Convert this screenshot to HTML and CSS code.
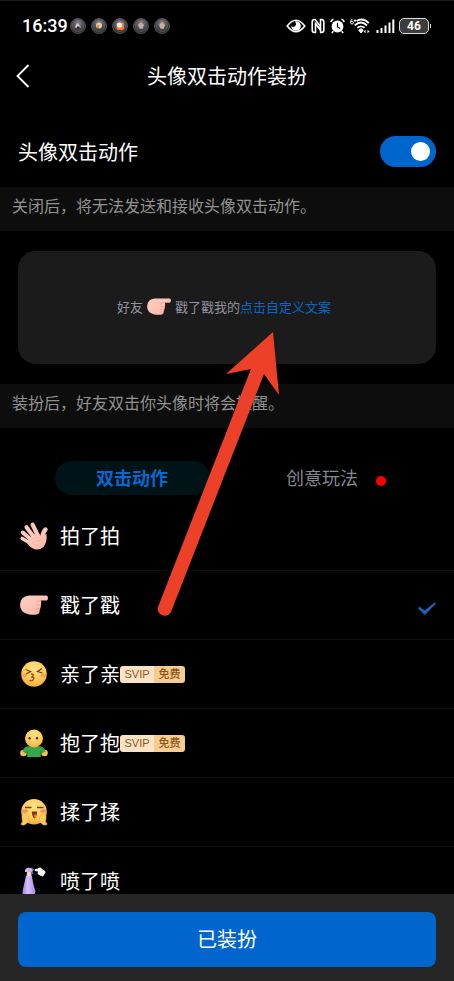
FILE: index.html
```html
<!DOCTYPE html>
<html lang="zh-CN">
<head>
<meta charset="utf-8">
<meta name="viewport" content="width=device-width, initial-scale=1">
<title>头像双击动作装扮</title>
<link rel="stylesheet" href="styles.css">
</head>
<body>
<svg class="defs" aria-hidden="true">
  <defs>
    <linearGradient id="skin" x1="0" y1="0" x2="1" y2="1"><stop offset="0" stop-color="#ffd0c4"/><stop offset="1" stop-color="#fbb3a6"/></linearGradient>
    <radialGradient id="face" cx=".5" cy=".3" r=".75"><stop offset="0" stop-color="#ffe38a"/><stop offset=".6" stop-color="#fdcb55"/><stop offset="1" stop-color="#f2a53c"/></radialGradient>
    <linearGradient id="bottle" x1="0" x2="1"><stop offset="0" stop-color="#9c7cf0"/><stop offset=".4" stop-color="#d5c3fb"/><stop offset="1" stop-color="#a78be8"/></linearGradient>
    <radialGradient id="lens" cx=".5" cy=".35" r=".6"><stop offset="0" stop-color="#8d8f99"/><stop offset=".6" stop-color="#45454e"/><stop offset="1" stop-color="#29292c"/></radialGradient>
    <symbol id="poke" viewBox="0 0 28 20">
      <path d="M9 .5H26.5Q28 .7 28 3T26.500 5.500H20.500Q21.800 6.500 21 8.500Q21.500 9 20.500 12.500Q20.500 13 19.500 15.500Q20 18.500 17.500 19.300Q13 20.300 8.500 19.300Q0 17.500 0 10Q0 1.500 9 .5Z" fill="url(#skin)"/>
      <path d="M20.500 5.600Q17 5.800 16 7.500M21 9.500Q18.500 10.500 16.500 10M20.300 13Q18 14 16 13.300M19.300 16Q17.500 17 15.500 16.300" fill="none" stroke="#ed9a90" stroke-width=".7"/>
    </symbol>
    <symbol id="badge-lens" viewBox="0 0 16 16">
      <circle cx="8" cy="8" r="7.500" fill="url(#lens)" stroke="#6b6462" stroke-width=".7"/>
      <circle cx="8" cy="8" r="5.500" fill="none" stroke="#9a9696" stroke-opacity=".45" stroke-width=".7"/>
    </symbol>
  </defs>
</svg>
<div class="screen">
  <div class="status">
    <time class="clock">16:39</time>
    <div class="notices" aria-hidden="true">
      <svg viewBox="0 0 16 16"><use href="#badge-lens"/><path d="M4.500 9.500 7.500 5 11 9.500Z" fill="#d8d2c5"/><path d="M7 8.500h2.500v2H7z" fill="#282018"/></svg>
      <svg viewBox="0 0 16 16"><use href="#badge-lens"/><circle cx="8" cy="7.500" r="3" fill="#e9c8a0"/><path d="M6 7h2v3H6z" fill="#d98a45"/></svg>
      <svg viewBox="0 0 16 16"><use href="#badge-lens"/><rect x="4.500" y="4.500" width="7.500" height="7.500" rx="2" fill="#f47b31"/><circle cx="7.500" cy="7" r="2.600" fill="#fff0df"/></svg>
      <svg viewBox="0 0 16 16"><use href="#badge-lens"/><path d="M8 4 11 7 9.500 11 6.500 10.500 5 7Z" fill="#bdaea0"/></svg>
      <svg viewBox="0 0 16 16"><use href="#badge-lens"/><path d="M8 4 11 7 9.500 11 6.500 10.500 5 7Z" fill="#c5b39c"/></svg>
    </div>
    <div class="system">
      <svg width="20" height="16" viewBox="0 0 20 16" aria-hidden="true"><path d="M1.200 8Q10-3.500 18.800 8Q10 19.500 1.200 8Z" fill="none" stroke="#fff" stroke-width="1.600"/><path d="M10 3.200a4.800 4.800 0 1 1-4.800 4.800Q7.800 10 9.600 7.500Q10.700 5.500 9 3.400Z" fill="#fff"/></svg>
      <svg width="14" height="16" viewBox="0 0 14 16" aria-hidden="true"><path d="M5 1.500H3.500Q1.200 1.500 1.200 4v8Q1.200 14.500 3.500 14.500h1V5.500l5 6.500V1.500h1Q12.800 1.500 12.800 4v8Q12.800 14.500 10.500 14.500H9" fill="none" stroke="#fff" stroke-width="1.600"/><path d="M4.500 2 9.500 8.500M4.500 5.500 9.500 12V14.500" stroke="#fff" stroke-width="1.500" fill="none"/></svg>
      <svg width="15" height="16" viewBox="0 0 15 16" aria-hidden="true"><circle cx="7.500" cy="8.500" r="5.900" fill="#fff"/><path d="M.8 4Q1.200 1.800 3.500 1.200M14.200 4Q13.800 1.800 11.500 1.200M3.300 13.200 1.800 15M11.700 13.200 13.200 15" stroke="#fff" stroke-width="1.600" fill="none"/><path d="M7.500 4.800V9L10.200 10.500" stroke="#000" stroke-width="1.200" fill="none"/></svg>
      <svg width="21" height="16" viewBox="0 0 21 16" aria-hidden="true"><path d="M2.500 .8Q.6 2 .6 4.600a1.400 1.400 0 1 0 1.400-1.400Q1.100 3.200 .6 4.300M3.800 2.500h2.400M5 1.300v2.400" stroke="#fff" fill="none"/><path d="M6.500 3Q13-.8 18.800 5.200M4.700 7.300Q11 1.500 17 7.500M7.300 9.900Q11 6.800 14.500 9.800" stroke="#fff" stroke-width="1.800" fill="none"/><path d="M8.800 12.200 11 10.700 13.200 12.200 11 15Z" fill="#fff" stroke="#fff"/><path d="m13.500 13.500 2-1.800v3.600zM19.500 13.500 17.500 11.700v3.600z" fill="#fff"/></svg>
      <svg width="18" height="16" viewBox="0 0 18 16" aria-hidden="true"><path d="M1.500 12V15M5.500 10V15M9.500 7.500V15M13.500 4.500V15M17.300 1.500V15" stroke="#fff" stroke-width="2"/></svg>
      <span class="battery">46</span>
    </div>
  </div>

  <header class="header">
    <button class="back" type="button" aria-label="返回"><svg width="14" height="24" viewBox="0 0 14 24"><path d="M12.500 1 1.500 12 12.500 23" fill="none" stroke="#fff" stroke-width="1.800"/></svg></button>
    <h1 class="title">头像双击动作装扮</h1>
  </header>

  <main class="content">
    <div class="setting">
      <label for="double-tap">头像双击动作</label>
      <input class="switch" id="double-tap" type="checkbox" role="switch" checked>
    </div>
    <p class="note">关闭后，将无法发送和接收头像双击动作。</p>
    <section class="preview">
      <span>好友</span>
      <svg class="preview-hand" viewBox="0 0 28 20" aria-hidden="true"><use href="#poke"/></svg>
      <span>戳了戳我的<a href="#text">点击自定义文案</a></span>
    </section>
    <p class="note">装扮后，好友双击你头像时将会提醒。</p>

    <div class="tabs" role="tablist">
      <button class="tab active" type="button" role="tab" aria-selected="true">双击动作</button>
      <button class="tab dotted" type="button" role="tab" aria-selected="false">创意玩法</button>
    </div>

    <div class="actions">
      <label class="action">
        <input type="radio" name="action">
        <svg class="emoji" viewBox="0 0 28 28" aria-hidden="true"><g stroke="#ffc8bd" stroke-linecap="round" fill="none"><path d="M10 21 2.200 16.500" stroke-width="3.600"/><path d="M12 18.500 2.800 10.500" stroke-width="4"/><path d="M14.500 16 6.500 5.200" stroke-width="4"/><path d="M18 14 12.600 2.700" stroke-width="4.200"/><path d="M22 18Q22 11.500 25.500 7.500" stroke-width="4.400"/></g><path d="M8 17.500 12.500 13 18.500 11 21 14.500 26.500 12Q27.500 20 23.500 25Q18 29.500 12 26Q7.500 23 7 20Z" fill="url(#skin)"/><path d="M10.500 18Q14 14.500 19 15.500M12 21.500Q17 17 22 18" fill="none" stroke="#f3aca0" stroke-width=".6"/></svg>
        <span>拍了拍</span>
      </label>
      <label class="action">
        <input type="radio" name="action" checked>
        <svg class="emoji" viewBox="0 0 28 20" aria-hidden="true"><use href="#poke"/></svg>
        <span>戳了戳</span>
        <svg class="tick" viewBox="0 0 18 14" aria-hidden="true"><path d="M0 6.200 1.600 4.800 6.700 8.600 16.800 .3 18 1.500 6.900 13Z" fill="#1e62b8"/></svg>
      </label>
      <label class="action">
        <input type="radio" name="action">
        <svg class="emoji" viewBox="0 0 28 28" aria-hidden="true"><circle cx="14" cy="14" r="12.800" fill="url(#face)"/><ellipse cx="4.500" cy="15.500" rx="2.500" ry="1.800" fill="#f48a68" opacity=".7"/><ellipse cx="23.500" cy="15.500" rx="2.500" ry="1.800" fill="#f48a68" opacity=".7"/><path d="M5.500 9.500 10.500 11.500 6 14M22 8.500 17.500 11.500 22.500 13" fill="none" stroke="#744016" stroke-width="1.300"/><path d="M11 14Q15 14 12 17Q15.500 17.500 12.500 20.500Q10 21 9.800 20" fill="none" stroke="#b8411d" stroke-width="1.400"/></svg>
        <span>亲了亲</span>
        <span class="badge"><span>SVIP</span><b>免费</b></span>
      </label>
      <label class="action">
        <input type="radio" name="action">
        <svg class="emoji" viewBox="0 0 28 28" aria-hidden="true"><circle cx="3.500" cy="24" r="3.300" fill="#f7bd56"/><circle cx="24.500" cy="24" r="3.300" fill="#f7bd56"/><path d="M2.500 22Q4 17.500 9 17.300H19Q24 17.500 25.500 22L22 24.500 21 23V28H7V23L5.500 24.500Z" fill="#36a64a"/><path d="M7.200 27.500V22M20.800 27.500V22" stroke="#207b32"/><circle cx="14" cy="9.500" r="9" fill="url(#face)"/><circle cx="9.600" cy="9.300" r="1.200" fill="#55320e"/><circle cx="17" cy="9.300" r="1.200" fill="#55320e"/></svg>
        <span>抱了抱</span>
        <span class="badge"><span>SVIP</span><b>免费</b></span>
      </label>
      <label class="action">
        <input type="radio" name="action">
        <svg class="emoji" viewBox="0 0 28 28" aria-hidden="true"><circle cx="14" cy="13.800" r="12.800" fill="url(#face)"/><path d="M5 9.500H11.500M17 9.500H23.500" stroke="#70410f" stroke-width="1.400"/><ellipse cx="5" cy="13" rx="3" ry="1.800" fill="#f57e63" opacity=".75"/><ellipse cx="23" cy="13" rx="3" ry="1.800" fill="#f57e63" opacity=".75"/><path d="M11.800 13.500H17Q17 19 14.500 20.500Q12 19 11.800 13.500Z" fill="#873215"/><path d="M14 16.500h2v3h-1.500z" fill="#f36f5a"/><path d="M3 14 8.500 18Q10 21 7 25Q4 28.500 1 26.500Q1 24.500 2.500 24Q1 19 3 14ZM25 14 19.500 18Q18 21 21 25Q24 28.500 27 26.500Q27 24.500 25.500 24Q27 19 25 14Z" fill="#fdca5b" stroke="#eda54a" stroke-width=".5"/></svg>
        <span>揉了揉</span>
      </label>
      <label class="action">
        <input type="radio" name="action">
        <svg class="emoji" viewBox="0 0 28 28" aria-hidden="true"><path d="M5 3Q6 .5 9 .8L13 1.500 12.500 5H5Z" fill="#c8b3f3"/><path d="M7 5h4.500v4H6.500z" fill="#f5d4c2"/><path d="M12 1.800 15 3.500M12 4.500 13 7" stroke="#7865a5" stroke-width="1.200"/><path d="M15 2.300 18 1.500Q20-.5 22 2L25 4Q26.500 5.500 24.500 7L23 9.500 20 8.500 17.500 7 18 4.500 15 4Z" fill="#f6f3f6"/><path d="M6 9H12Q12.500 15 15.500 24.500L14.500 28H3Q2 26 3 22Z" fill="url(#bottle)"/></svg>
        <span>喷了喷</span>
      </label>
    </div>
  </main>

  <footer class="footer"><button class="apply" type="button">已装扮</button></footer>
  <svg class="pointer" viewBox="0 0 122 286" aria-hidden="true"><path d="M117 0 123 63 108 42 15 280A7 7 0 0 1 2 275L95 37 70 42Z" fill="#ec4128"/></svg>
</div>
</body>
</html>
```

FILE: styles.css
```css
* { box-sizing: border-box; }

body {
  margin: 0;
  background: #000;
  color: #fff;
  font-family: "Noto Sans CJK SC", sans-serif;
  font-size: 20px;
  line-height: 28px;
}

button { border: 0; padding: 0; background: none; color: inherit; font: inherit; }
svg { display: block; flex: none; overflow: visible; }
.defs { position: absolute; width: 0; height: 0; }

.screen {
  position: relative;
  display: flex;
  flex-direction: column;
  height: 100vh;
  overflow: hidden;
  border-top: 1px solid #1a1a1a;
}

.status {
  display: flex;
  align-items: center;
  flex: none;
  height: 50px;
  padding: 0 25px 0 22px;
}
.clock { font: 500 18px/24px Roboto, sans-serif; }
.notices { display: flex; gap: 5px; margin-left: 2px; }
.notices svg { width: 16px; height: 16px; }
.system { display: flex; align-items: center; gap: 5px; margin-left: auto; }
.battery {
  position: relative;
  width: 30px;
  height: 16px;
  border: 1px solid #ddd;
  border-radius: 5px;
  background: #3c3c3c;
  font: 700 12px/14px Roboto, sans-serif;
  text-align: center;
}
.battery::after {
  content: "";
  position: absolute;
  top: 5px;
  right: -3px;
  width: 1px;
  height: 4px;
  background: #ddd;
}

.header {
  display: grid;
  grid-template-columns: 40px 1fr 40px;
  align-items: center;
  flex: none;
  height: 50px;
  padding: 0 16px;
}
.title { margin: 0; font-size: 20px; font-weight: 400; text-align: center; }

.content {
  display: flex;
  flex-direction: column;
  flex: 1;
  min-height: 0;
}
.content > * { flex: none; }
.setting {
  display: flex;
  align-items: center;
  justify-content: space-between;
  height: 86px;
  padding: 15px 18px 0;
}
.switch {
  appearance: none;
  display: flex;
  align-items: center;
  justify-content: flex-end;
  width: 56px;
  height: 31px;
  margin: 0;
  padding: 0 6px;
  border-radius: 16px;
  background: #444;
}
.switch:not(:checked) { justify-content: flex-start; }
.switch:checked { background: #0066cd; }
.switch::before {
  content: "";
  width: 19px;
  height: 19px;
  border-radius: 50%;
  background: #fff;
}

.note {
  margin: 0;
  padding: 6px 12px 14px;
  background: #0d0d0d;
  color: #929292;
  font-size: 16px;
  line-height: 24px;
}
.preview {
  display: flex;
  align-items: center;
  justify-content: center;
  gap: 4px;
  height: 113px;
  margin: 20px 18px;
  padding: 0 6px 2px 0;
  border-radius: 18px;
  background: #1b1b1b;
  color: #92909e;
  font-size: 13px;
}
.preview a { color: #0867c5; text-decoration: none; }
.preview-hand { width: 24px; height: 17px; }

.tabs {
  display: grid;
  grid-template-columns: 1fr 1fr;
  justify-items: center;
  padding: 33px 37px 7px;
}
.tab {
  position: relative;
  width: 155px;
  height: 34px;
  padding-bottom: 2px;
  border-radius: 17px;
  color: #858694;
  font-size: 18px;
}
.tab.active { background: #001418; color: #0867d2; font-weight: 700; }
.dotted::after {
  content: "";
  position: absolute;
  top: 15px;
  right: 14px;
  width: 10px;
  height: 10px;
  border-radius: 50%;
  background: #f00;
}

.content > .actions { flex: 1; min-height: 0; overflow: hidden; }
.action {
  position: relative;
  display: flex;
  align-items: center;
  height: 69px;
  padding: 0 18px 0 20px;
  border-bottom: 1px solid #0d0d0d;
}
.action input { position: absolute; opacity: 0; }
.emoji { width: 28px; height: 28px; margin-right: 12px; }
.tick { width: 18px; height: 14px; margin: 8px 0 0 auto; }
.badge {
  display: flex;
  overflow: hidden;
  border-radius: 3px;
  color: #8d5518;
  font: 11px/17px "Liberation Sans", "Noto Sans CJK SC", sans-serif;
  text-align: center;
}
.badge span { width: 34px; background: #fbe4c5; }
.badge b { width: 31px; background: #f5cd93; font-weight: 500; }

.footer { flex: none; padding: 18px 18px 14px; background: #262626; }
.apply {
  display: block;
  width: 100%;
  height: 55px;
  padding-bottom: 2px;
  border-radius: 8px;
  background: #0066cd;
}

.pointer {
  position: absolute;
  top: 331px;
  left: 156px;
  width: 122px;
  height: 286px;
  pointer-events: none;
}
```
